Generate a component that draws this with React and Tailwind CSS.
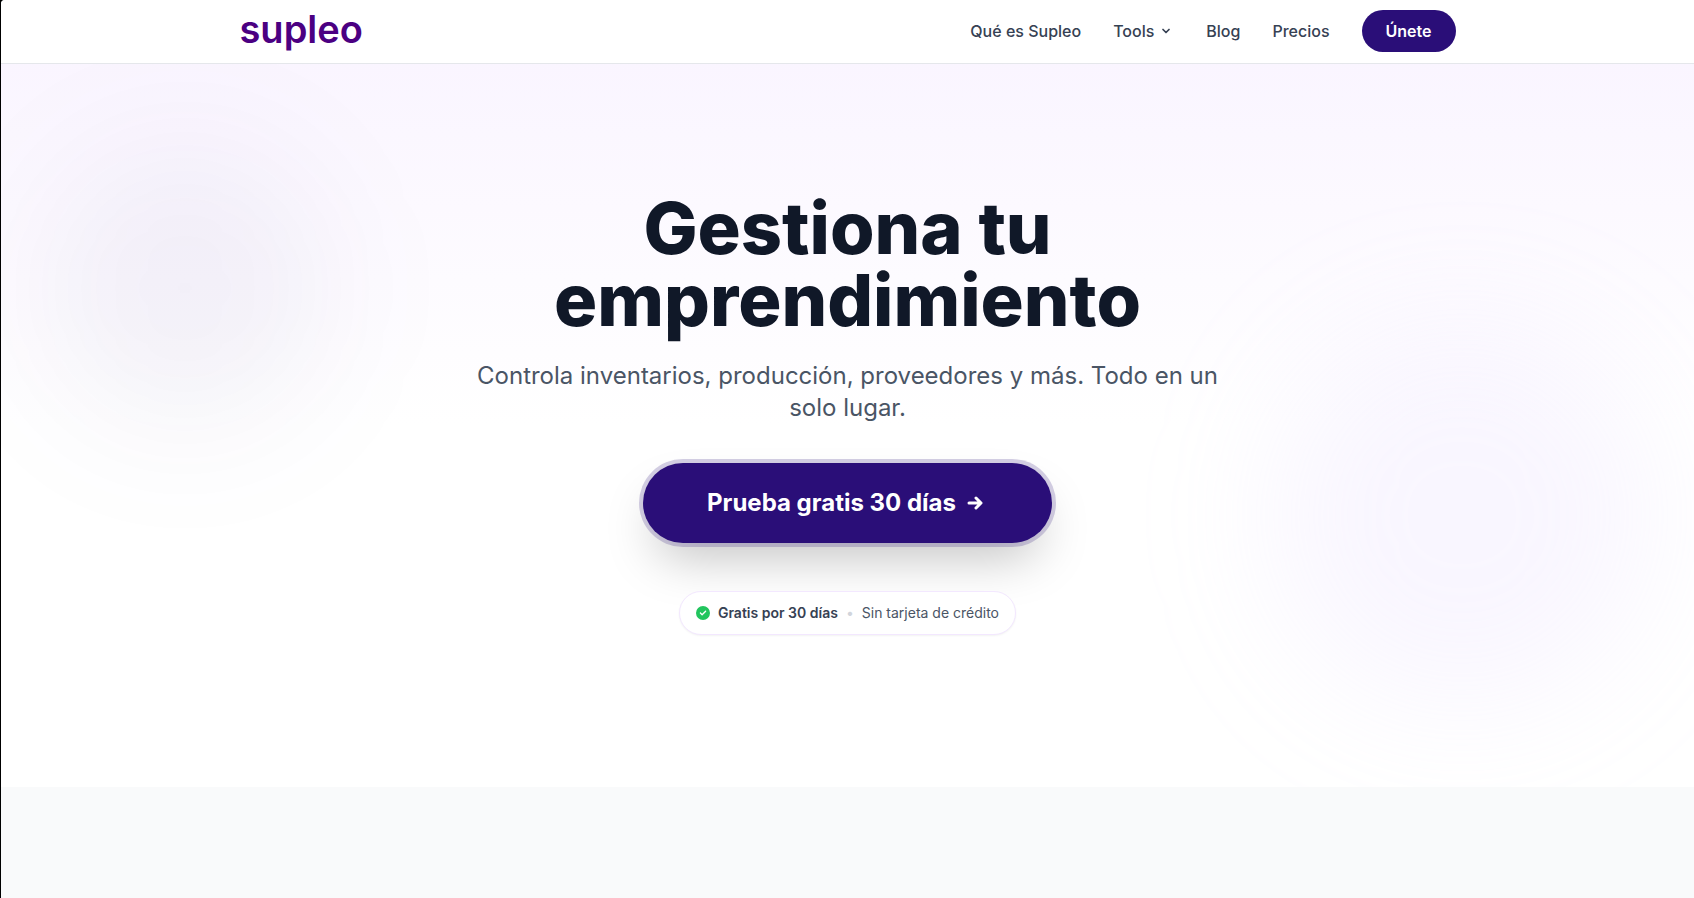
import React from 'react';
import { ChevronDown } from 'lucide-react';
import { FaCircleCheck } from 'react-icons/fa6';

const navLink = 'text-base font-medium text-gray-700 transition hover:text-[#2a0e78]';

const Header = () => (
  <header className="border-b border-gray-200 bg-white">
    <div className="mx-auto flex max-w-7xl items-center justify-between px-8 pt-2.5 pb-[11px]">
      <a href="#inicio" className="pb-1 text-[38px] leading-8 font-semibold text-[#4b0082]">
        supleo
      </a>

      <nav className="flex items-center gap-8">
        <a href="#que-es" className={navLink}>Qué es Supleo</a>
        <button type="button" className={`flex items-center gap-1.5 pr-0.5 ${navLink}`}>
          Tools
          <ChevronDown className="size-3" strokeWidth={3.5} />
        </button>
        <a href="#blog" className={navLink}>Blog</a>
        <a href="#precios" className={navLink}>Precios</a>
        <a
          href="#unete"
          className="rounded-full bg-[#2a0e78] px-6 py-[9px] text-base font-semibold text-white transition hover:bg-[#3a1a96]"
        >
          Únete
        </a>
      </nav>
    </div>
  </header>
);

const ArrowIcon = () => (
  <svg
    viewBox="0 0 24 24"
    fill="none"
    stroke="currentColor"
    strokeWidth="3"
    strokeLinecap="round"
    strokeLinejoin="round"
    className="size-6"
    aria-hidden="true"
  >
    <path d="M5 12h11.500M12 7l5 5-5 5" />
  </svg>
);

const Hero = () => (
  <section className="relative overflow-hidden bg-linear-to-b from-purple-50 via-white to-white px-8 pt-32 pb-38">
    <div className="absolute top-20 left-10 size-72 rounded-full bg-[#2a0e78]/5 blur-3xl" />
    <div className="absolute right-10 bottom-20 size-96 rounded-full bg-[#d8c4ff]/15 blur-3xl" />

    <div className="relative mx-auto flex max-w-4xl flex-col items-center text-center">
      <h1 className="text-7xl leading-none font-extrabold text-gray-900">
        Gestiona tu emprendimiento
      </h1>
      <p className="mt-6 max-w-3xl text-2xl leading-8 text-gray-600">
        Controla inventarios, producción, proveedores y más. Todo en un solo lugar.
      </p>
      <a
        href="#prueba"
        className="mt-[39px] inline-flex items-center gap-2 rounded-full bg-[#2a0e78] px-16 py-6 text-2xl leading-8 font-bold text-white shadow-2xl ring-4 ring-[#2a0e78]/20 transition hover:bg-[#3a1a96]"
      >
        Prueba gratis 30 días
        <ArrowIcon />
      </a>
      <div className="mt-12 flex items-center gap-2 rounded-full border border-purple-100 bg-white px-4 py-[11px] text-sm leading-5 shadow-xs">
        <FaCircleCheck className="size-3.5 text-[#22c55e]" />
        <span className="font-semibold text-gray-700">Gratis por 30 días</span>
        <span className="text-gray-300">•</span>
        <span className="text-gray-600">Sin tarjeta de crédito</span>
      </div>
    </div>
  </section>
);

const App = () => (
  <div className="min-h-screen bg-black font-['Inter',sans-serif] antialiased">
    <div className="ml-px min-h-screen overflow-hidden rounded-tl-sm bg-gray-50">
      <Header />
      <Hero />
    </div>
  </div>
);

export default App;
